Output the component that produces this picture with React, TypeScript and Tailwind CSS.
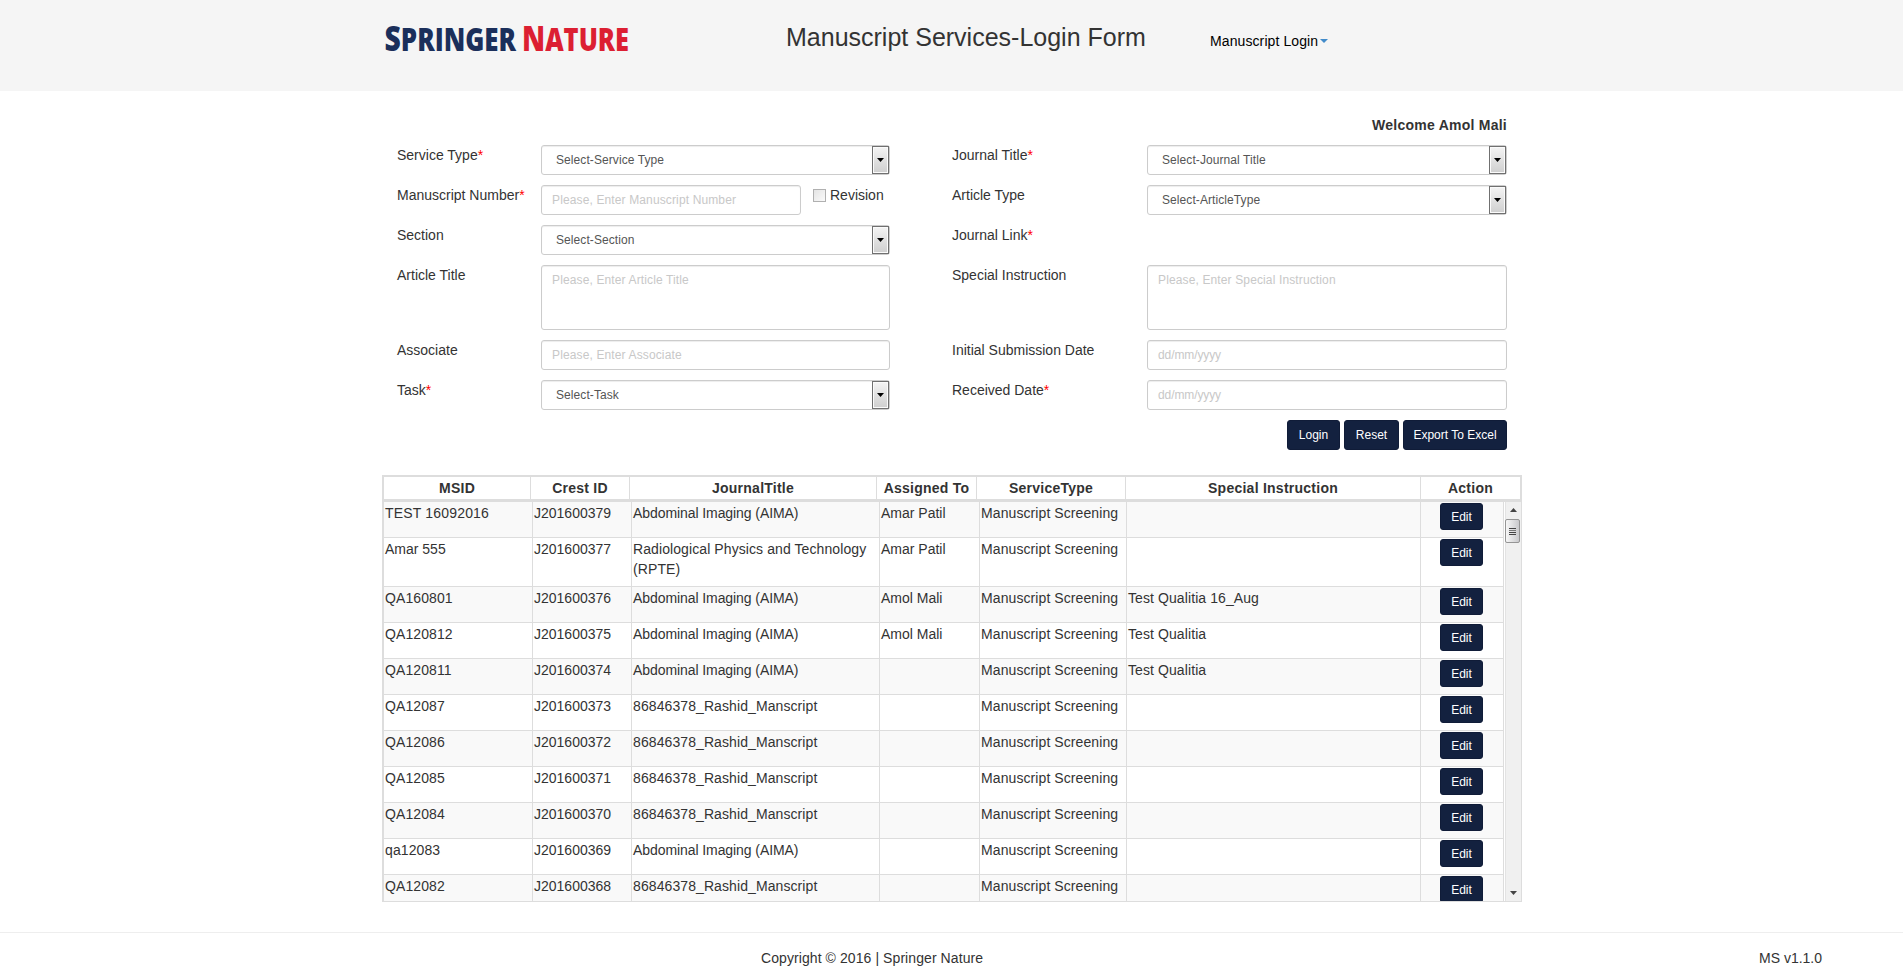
import React from "react";

const rows: string[][] = [
  ["TEST 16092016", "J201600379", "Abdominal Imaging (AIMA)", "Amar Patil", "Manuscript Screening", ""],
  ["Amar 555", "J201600377", "Radiological Physics and Technology (RPTE)", "Amar Patil", "Manuscript Screening", ""],
  ["QA160801", "J201600376", "Abdominal Imaging (AIMA)", "Amol Mali", "Manuscript Screening", "Test Qualitia 16_Aug"],
  ["QA120812", "J201600375", "Abdominal Imaging (AIMA)", "Amol Mali", "Manuscript Screening", "Test Qualitia"],
  ["QA120811", "J201600374", "Abdominal Imaging (AIMA)", "", "Manuscript Screening", "Test Qualitia"],
  ["QA12087", "J201600373", "86846378_Rashid_Manscript", "", "Manuscript Screening", ""],
  ["QA12086", "J201600372", "86846378_Rashid_Manscript", "", "Manuscript Screening", ""],
  ["QA12085", "J201600371", "86846378_Rashid_Manscript", "", "Manuscript Screening", ""],
  ["QA12084", "J201600370", "86846378_Rashid_Manscript", "", "Manuscript Screening", ""],
  ["qa12083", "J201600369", "Abdominal Imaging (AIMA)", "", "Manuscript Screening", ""],
  ["QA12082", "J201600368", "86846378_Rashid_Manscript", "", "Manuscript Screening", ""],
];

const headers = ["MSID", "Crest ID", "JournalTitle", "Assigned To", "ServiceType", "Special Instruction", "Action"];

const fieldBox = "rounded-[3px] border border-[#ccc] bg-white shadow-[inset_0_1px_1px_rgba(0,0,0,0.075)]";

function cellTracking(text: string) {
  if (text.startsWith("Abdominal")) return "-tracking-[0.08px]";
  if (text.startsWith("TEST")) return "tracking-[0.18px]";
  if (text.startsWith("J2016") || text.startsWith("Am")) return "";
  return "tracking-[0.09px]";
}

function Label({ text, required }: { text: string; required?: boolean }) {
  return (
    <div className="h-5 leading-5 whitespace-nowrap">
      {text}
      {required && <span className="text-[#f00]">*</span>}
    </div>
  );
}

function SelectBox({ text }: { text: string }) {
  return (
    <div className={"flex h-[30px] justify-between pl-[14px] text-xs text-[#555] " + fieldBox}>
      <span className="leading-7 tracking-[0.08px]">{text}</span>
      <div className="flex h-7 w-[17px] items-center justify-center border border-[#707070] bg-linear-to-b from-[#f4f4f4] to-[#cfcfcf] shadow-[inset_0_0_0_1px_#fbfbfb]">
        <svg width="7" height="4" viewBox="0 0 7 4">
          <path d="M0 0h7L3.5 4z" fill="#000" />
        </svg>
      </div>
    </div>
  );
}

function TextBox({ text, tall }: { text: string; tall?: boolean }) {
  return (
    <div
      className={
        (tall ? "h-[65px] " : "h-[30px] ") +
        (text === "dd/mm/yyyy" ? "-tracking-[0.1px] " : "tracking-[0.13px] ") +
        "pl-[10px] text-xs leading-7 text-[#c8c8c8] " +
        fieldBox
      }
    >
      {text}
    </div>
  );
}

function Button({ text, size }: { text: string; size: string }) {
  return (
    <button className={size + " rounded-[3px] border border-[#101c38] bg-[#13213f] text-xs whitespace-nowrap text-white"}>
      {text}
    </button>
  );
}

export default function App() {
  return (
    <div className="flex h-[978px] w-[1903px] flex-col overflow-hidden bg-white font-['Liberation_Sans',Arial,sans-serif] text-sm leading-5 text-[#333]">
      <header className="flex h-[91px] shrink-0 bg-[#f5f5f5] pl-[375px]">
        <svg width="266" height="80" className="shrink-0" role="img">
          <g fontFamily="'Open Sans', sans-serif" fontWeight="800">
            <text x="9.5" y="50.5" textLength="131.500" lengthAdjust="spacingAndGlyphs" fill="#1b2f5b">
              <tspan fontSize="35">S</tspan>
              <tspan fontSize="32">PRINGER</tspan>
            </text>
            <text x="147" y="50.5" textLength="107" lengthAdjust="spacingAndGlyphs" fill="#dc1f32">
              <tspan fontSize="35">N</tspan>
              <tspan fontSize="32">ATURE</tspan>
            </text>
          </g>
        </svg>
        <h1 className="ml-[145px] w-[360px] pt-[22px] text-[25px] leading-[30px] whitespace-nowrap">Manuscript Services-Login Form</h1>
        <div className="ml-16 flex items-center self-start pt-[31px] tracking-[0.1px] text-black">
          Manuscript Login
          <svg width="8" height="4" viewBox="0 0 8 4" className="ml-0.5">
            <path d="M0 0h8L4 4z" fill="#428bca" />
          </svg>
        </div>
      </header>

      <section className="mt-6 ml-[397px] w-[1110px]">
        <div className="text-right leading-5 font-bold tracking-[0.25px]">Welcome Amol Mali</div>
        <div className="mt-[10px] grid grid-cols-[144px_349px_62px_195px_360px] gap-y-[10px]">
          <Label text="Service Type" required />
          <SelectBox text="Select-Service Type" />
          <i />
          <Label text="Journal Title" required />
          <SelectBox text="Select-Journal Title" />

          <Label text="Manuscript Number" required />
          <div className="flex">
            <div className="w-[260px]">
              <TextBox text="Please, Enter Manuscript Number" />
            </div>
            <div className="mt-1 ml-3 size-[13px] border border-[#b0b0b0] bg-linear-to-br from-[#e4e4e4] to-[#fafafa]" />
            <span className="ml-1">Revision</span>
          </div>
          <i />
          <Label text="Article Type" />
          <SelectBox text="Select-ArticleType" />

          <Label text="Section" />
          <SelectBox text="Select-Section" />
          <i />
          <Label text="Journal Link" required />
          <i />

          <Label text="Article Title" />
          <TextBox text="Please, Enter Article Title" tall />
          <i />
          <Label text="Special Instruction" />
          <TextBox text="Please, Enter Special Instruction" tall />

          <Label text="Associate" />
          <TextBox text="Please, Enter Associate" />
          <i />
          <Label text="Initial Submission Date" />
          <TextBox text="dd/mm/yyyy" />

          <Label text="Task" required />
          <SelectBox text="Select-Task" />
          <i />
          <Label text="Received Date" required />
          <TextBox text="dd/mm/yyyy" />
        </div>
        <div className="mt-[10px] flex justify-end gap-1">
          <Button text="Login" size="h-[30px] w-[53px]" />
          <Button text="Reset" size="h-[30px] w-[55px]" />
          <Button text="Export To Excel" size="h-[30px] w-[104px]" />
        </div>
      </section>

      <section className="mt-[25px] ml-[382px] w-[1140px]">
        <div className="grid h-[27px] grid-cols-[147px_99px_247px_100px_149px_295px_99px] border-2 border-b-3 border-[#ddd]">
          {headers.map((h) => (
            <div key={h} className="border-r border-[#ddd] text-center leading-[23px] font-bold tracking-[0.25px] last:border-r-0">
              {h}
            </div>
          ))}
        </div>
        <div className="flex h-[400px] overflow-hidden border-r border-b border-l-2 border-[#ddd]">
          <div className="w-[1120px] shrink-0">
            {rows.map((r, i) => (
              <div
                key={r[1]}
                className={
                  (i % 2 ? "bg-white " : "bg-[#f9f9f9] ") +
                  (i === 1 ? "h-[49px] " : "h-9 ") +
                  "grid grid-cols-[149px_99px_248px_100px_147px_294px_83px] border-b border-[#ddd]"
                }
              >
                {r.map((c, j) => (
                  <div key={j} className={"border-r border-[#ddd] pt-px pl-px " + cellTracking(c)}>
                    {c}
                  </div>
                ))}
                <div className="flex items-start border-r border-[#ddd] pt-px pl-[19px]">
                  <Button text="Edit" size="h-[27px] w-[43px]" />
                </div>
              </div>
            ))}
          </div>
          <div className="ml-px flex w-4 shrink-0 flex-col border-l border-[#e3e3e3] bg-[#f0f0f0]">
            <svg width="7" height="4" viewBox="0 0 7 4" className="mt-[6px] ml-1">
              <path d="M0 4h7L3.5 0z" fill="#444" />
            </svg>
            <div className="mt-[7px] -ml-px flex h-6 w-[15px] flex-col items-center justify-center gap-px rounded-[2px] border border-[#959595] bg-linear-to-r from-[#f7f7f7] to-[#c9c9cc]">
              <div className="h-px w-[7px] bg-[#444]" />
              <div className="h-px w-[7px] bg-[#777]" />
              <div className="h-px w-[7px] bg-[#444]" />
              <div className="h-px w-[7px] bg-[#444]" />
            </div>
            <svg width="7" height="4" viewBox="0 0 7 4" className="mt-auto mb-[6px] ml-1">
              <path d="M0 0h7L3.5 4z" fill="#444" />
            </svg>
          </div>
        </div>
      </section>

      <footer className="mt-[30px] flex border-t border-[#eee] pt-[15px]">
        <span className="ml-[761px] w-[998px] tracking-[0.08px]">Copyright © 2016 | Springer Nature</span>
        <span>MS v1.1.0</span>
      </footer>
    </div>
  );
}
